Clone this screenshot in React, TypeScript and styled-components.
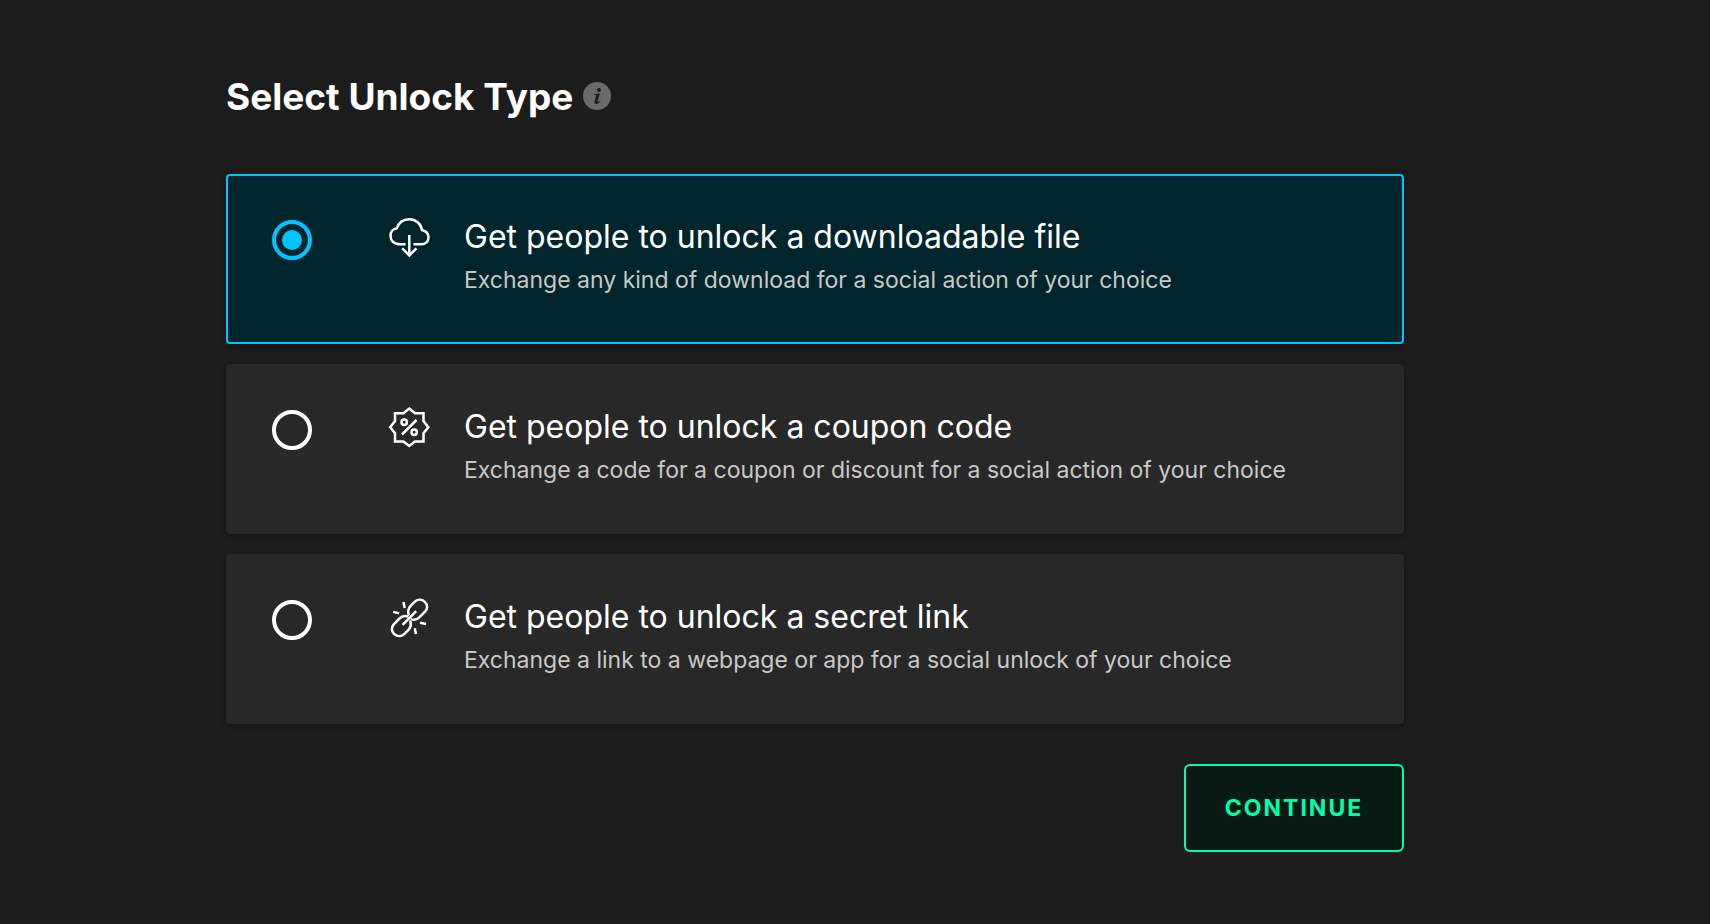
import React, { useState } from "react";
import styled, { createGlobalStyle } from "styled-components";

const GlobalStyle = createGlobalStyle`
  * { box-sizing: border-box; }
  body {
    margin: 0;
    background: #1c1c1c;
    color: #fff;
    font-family: Inter, "Open Sans", sans-serif;
  }
`;

const Page = styled.main`
  min-height: 100vh;
  padding: 72px 306px 64px 226px;
`;

const Header = styled.header`
  display: flex;
  align-items: center;
  gap: 10px;
  height: 50px;
  margin-bottom: 52px;
`;

const Heading = styled.h1`
  margin: 0;
  font-size: 37px;
  line-height: 50px;
  font-weight: 700;
  white-space: nowrap;
`;

const InfoButton = styled.button`
  display: flex;
  padding: 0;
  margin-bottom: 2px;
  border: 0;
  background: none;
  cursor: pointer;
`;

const Options = styled.fieldset`
  display: grid;
  gap: 20px;
  min-width: 0;
  margin: 0;
  padding: 0;
  border: 0;
`;

const OptionCard = styled.label<{ $selected: boolean }>`
  display: flex;
  align-items: flex-start;
  min-height: 170px;
  padding: 40px 44px;
  border: 2px solid ${(p) => (p.$selected ? "#00c3ff" : "#282828")};
  border-radius: 4px;
  background: ${(p) => (p.$selected ? "#00252d" : "#282828")};
  box-shadow: 0 2px 6px rgba(0, 0, 0, 0.3);
  cursor: pointer;
`;

const Radio = styled.input`
  appearance: none;
  display: grid;
  place-items: center;
  flex: none;
  width: 40px;
  height: 40px;
  margin: 4px 76px 0 0;
  border: 4px solid #fff;
  border-radius: 50%;
  cursor: pointer;

  &:checked {
    border-color: #00c3ff;
  }

  &:checked::before {
    content: "";
    width: 20px;
    height: 20px;
    border-radius: 50%;
    background: #00c3ff;
  }
`;

const OptionIcon = styled.svg`
  flex: none;
  width: 42px;
  height: 42px;
  margin-right: 34px;
  fill: none;
  stroke: #fff;
  stroke-width: 2.5;
`;

const OptionText = styled.span`
  display: grid;
  gap: 6px;
`;

const OptionTitle = styled.span`
  font-size: 32px;
  line-height: 42px;
`;

const OptionDescription = styled.span`
  font-size: 23px;
  line-height: 32px;
  color: #c8c8c8;
`;

const Actions = styled.div`
  display: flex;
  justify-content: flex-end;
  margin-top: 40px;
`;

const ContinueButton = styled.button`
  width: 220px;
  height: 88px;
  padding: 0;
  border: 2px solid #00ffaa;
  border-radius: 6px;
  background: #081a14;
  color: #00ffaa;
  font: inherit;
  font-size: 23px;
  font-weight: 700;
  letter-spacing: 2px;
  text-transform: uppercase;
  cursor: pointer;
`;

const InfoIcon = () => (
  <svg width="28" height="28" viewBox="0 0 28 28" aria-hidden="true">
    <circle cx="14" cy="14" r="14" fill="#6b6b6b" />
    <circle cx="16" cy="8" r="2" fill="#1c1c1c" />
    <path
      d="M11 12.2 L16.8 11.5 L14.7 19 Q14.5 20 15.2 19.9 Q16 19.6 17 18.5 L17.6 19 Q15.8 21.8 13.4 21.9 Q11 21.9 11.6 19.4 L13.1 13.7 Q13.2 13.1 12.4 13 L10.8 13 Z"
      fill="#1c1c1c"
    />
  </svg>
);

const CloudDownloadIcon = () => (
  <OptionIcon viewBox="0 0 42 42" aria-hidden="true">
    <path d="M17.5 28.3H12C6 28.3 2.5 24.5 2.5 19.8C2.5 16 5 13.2 8.7 12.4C10.8 6.5 15.5 3.2 21.3 3.2C27.7 3.2 32.9 7.8 34 14C38 15 40.5 17.6 40.5 21.3C40.5 25.3 37.6 28.3 33 28.3H25.5" />
    <path d="M21.3 19V39.2M14.2 32.4L21.3 39.4L28.4 32.4" />
  </OptionIcon>
);

const CouponIcon = () => (
  <OptionIcon viewBox="0 0 42 42" aria-hidden="true">
    <path d="M21.2 2.5L27 7.3H35.5V15L40.3 21.2L35.5 27.2V35.5H27L21.2 40L15.4 35.5H7V27.2L2.2 21.2L7 15V7.3H15.4Z" />
    <circle cx="16.2" cy="16.2" r="2.7" />
    <circle cx="26.2" cy="26.2" r="2.7" />
    <path d="M28.5 14L14 28.5" />
  </OptionIcon>
);

const LinkIcon = () => (
  <OptionIcon viewBox="0 0 42 42" aria-hidden="true">
    <path d="M22.8 23.2C26 24.4 29.2 23.6 31.6 21.2L37 15.7C39.9 12.6 39.8 8.6 36.8 5.8C33.6 2.9 29.3 3.2 26.3 6.1L22.8 9.6C20.2 12.4 19.5 15.8 21 19.4" />
    <path d="M20.4 20.6C17.2 19.3 13.9 20 11.4 22.5L6 28.1C3.1 31.1 3.2 35.2 6.2 38C9.4 40.8 13.7 40.6 16.7 37.6L20.2 34.1C22.8 31.4 23.5 28 22 24.4" />
    <path d="M28.2 15.2L14.6 28.8M16.7 12L15.4 6M11.2 17.4L5.2 15.9M32 26.7L38 28M26.7 32.2L28 38" />
  </OptionIcon>
);

const options = [
  {
    id: "file",
    title: "Get people to unlock a downloadable file",
    description: "Exchange any kind of download for a social action of your choice",
    Icon: CloudDownloadIcon,
  },
  {
    id: "coupon",
    title: "Get people to unlock a coupon code",
    description: "Exchange a code for a coupon or discount for a social action of your choice",
    Icon: CouponIcon,
  },
  {
    id: "link",
    title: "Get people to unlock a secret link",
    description: "Exchange a link to a webpage or app for a social unlock of your choice",
    Icon: LinkIcon,
  },
];

export default function App() {
  const [selected, setSelected] = useState("file");

  return (
    <>
      <GlobalStyle />
      <Page>
        <Header>
          <Heading id="unlock-heading">Select Unlock Type</Heading>
          <InfoButton type="button" aria-label="About unlock types">
            <InfoIcon />
          </InfoButton>
        </Header>
        <Options aria-labelledby="unlock-heading">
          {options.map(({ id, title, description, Icon }) => (
            <OptionCard key={id} htmlFor={id} $selected={selected === id}>
              <Radio
                type="radio"
                id={id}
                name="unlock-type"
                value={id}
                checked={selected === id}
                onChange={() => setSelected(id)}
              />
              <Icon />
              <OptionText>
                <OptionTitle>{title}</OptionTitle>
                <OptionDescription>{description}</OptionDescription>
              </OptionText>
            </OptionCard>
          ))}
        </Options>
        <Actions>
          <ContinueButton type="button">Continue</ContinueButton>
        </Actions>
      </Page>
    </>
  );
}
